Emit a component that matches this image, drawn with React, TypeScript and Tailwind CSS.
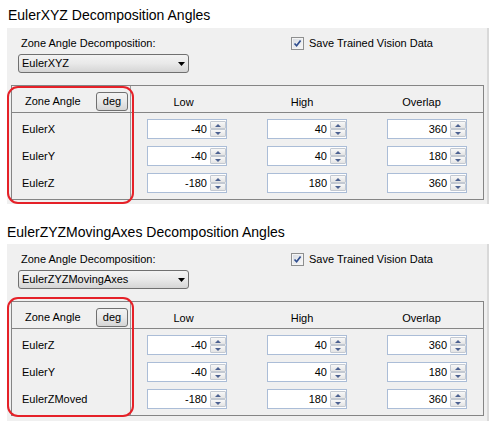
import React from 'react';

type Row = { name: string; low: number; high: number; overlap: number };

type SectionProps = {
  title: string;
  mode: string;
  rows: Row[];
  first?: boolean;
};

const Spin = ({ value }: { value: number }) => (
  <div className="flex h-[20px] w-[80px] border border-[#abbdd7] bg-white">
    <div className="flex-1 pr-[3px] text-right leading-[18px]">{value}</div>
    <div className="my-[1px] flex w-[16px] flex-col">
      <div className="flex h-[8px] items-center justify-center rounded-[1px] border border-[#c3c9d2] bg-gradient-to-b from-[#f8f8f8] to-[#e4e4e4]">
        <div className="h-0 w-0 border-x-[3px] border-b-[3px] border-x-transparent border-b-[#4d6291]" />
      </div>
      <div className="flex h-[8px] items-center justify-center rounded-[1px] border border-[#c3c9d2] bg-gradient-to-b from-[#f8f8f8] to-[#e4e4e4]">
        <div className="h-0 w-0 border-x-[3px] border-t-[3px] border-x-transparent border-t-[#4d6291]" />
      </div>
    </div>
  </div>
);

const Section = ({ title, mode, rows, first }: SectionProps) => (
  <div>
    <div
      className={
        first
          ? 'h-[28px] pl-[8px] pt-[7px] text-[14px] leading-[16px]'
          : 'h-[40px] pl-[7px] pt-[20px] text-[14px] leading-[16px]'
      }
    >
      {title}
    </div>

    <div
      className={
        'relative ml-[7px] w-[482px] border-r-2 border-[#d9d9d9] bg-[#f0f0f0] ' +
        (first ? 'h-[176px]' : 'h-[180px]')
      }
    >
      {/* combo + checkbox */}
      <div className="flex h-[57px]">
        <div className="w-[284px] pl-[11px] pt-[9px]">
          <div className="h-[13px] pl-[3px] leading-[13px]">Zone Angle Decomposition:</div>
          <div className="mt-[4px] flex h-[19px] w-[171px] items-center rounded-[3px] border border-[#707070] bg-gradient-to-b from-[#f3f3f3] via-[#e9e9e9] to-[#d5d5d5] pl-[3px] pr-[3px]">
            <span className="leading-[13px]">{mode}</span>
            <svg className="ml-auto" width="7" height="4" viewBox="0 0 7 4">
              <polygon points="0,0 7,0 3.5,4" fill="#000" />
            </svg>
          </div>
        </div>
        <div className="flex h-[13px] items-center pt-0 mt-[9px]">
          <div className="h-[13px] w-[13px] border border-[#8e8f8f] bg-[#f4f4f4] p-[1px]">
            <div className="h-full w-full bg-gradient-to-br from-[#d9dde3] to-[#f7f7f7]">
              <svg width="9" height="9" viewBox="0 0 9 9">
                <path d="M1.5 4.5 L3.6 6.8 L7.6 1.6" fill="none" stroke="#2f4d8e" strokeWidth="1.7" />
              </svg>
            </div>
          </div>
          <span className="ml-[5px] leading-[13px]">Save Trained Vision Data</span>
        </div>
      </div>

      {/* grid */}
      <div className="ml-[4px] w-[473px] border border-[#858585]">
        <div className="flex h-[27px] border-b border-[#858585]">
          <div className="flex w-[119px] items-center border-r border-[#9a9a9a] pb-[1px] pl-[13px] pt-[5px]">
            <span>Zone Angle</span>
            <div className="ml-auto mr-[2px] flex h-[19px] w-[32px] items-center justify-center rounded-[3px] border border-[#707070] bg-gradient-to-b from-[#f3f3f3] via-[#e9e9e9] to-[#d5d5d5]">
              deg
            </div>
          </div>
          <div className="w-[120px] pr-[15px] pt-[8px] text-center">Low</div>
          <div className="w-[120px] pr-[18px] pt-[8px] text-center">High</div>
          <div className="flex-1 pr-[11px] pt-[8px] text-center">Overlap</div>
        </div>

        {rows.map((r) => (
          <div key={r.name} className="flex h-[27px]">
            <div className="w-[119px] border-r border-[#9a9a9a] pl-[10px] pt-[10px] leading-[13px]">
              {r.name}
            </div>
            <div className="w-[120px] pl-[16px] pt-[6px]">
              <Spin value={r.low} />
            </div>
            <div className="w-[120px] pl-[16px] pt-[6px]">
              <Spin value={r.high} />
            </div>
            <div className="flex-1 pl-[16px] pt-[6px]">
              <Spin value={r.overlap} />
            </div>
          </div>
        ))}
        <div className="flex h-[5px]">
          <div className="w-[119px] border-r border-[#9a9a9a]" />
        </div>
      </div>

      {/* hand-drawn highlight */}
      <div
        className={
          'pointer-events-none absolute left-0 w-[127px] rounded-[11px] border-2 border-[#e52128] ' +
          (first ? 'top-[58px] h-[118px]' : 'top-[53px] h-[120px]')
        }
      />
    </div>
  </div>
);

const App = () => (
  <div className="h-[421px] w-[503px] overflow-hidden bg-white font-['Liberation_Sans',Arial,sans-serif] text-[11px] text-black">
    <Section
      first
      title="EulerXYZ Decomposition Angles"
      mode="EulerXYZ"
      rows={[
        { name: 'EulerX', low: -40, high: 40, overlap: 360 },
        { name: 'EulerY', low: -40, high: 40, overlap: 180 },
        { name: 'EulerZ', low: -180, high: 180, overlap: 360 },
      ]}
    />
    <Section
      title="EulerZYZMovingAxes Decomposition Angles"
      mode="EulerZYZMovingAxes"
      rows={[
        { name: 'EulerZ', low: -40, high: 40, overlap: 360 },
        { name: 'EulerY', low: -40, high: 40, overlap: 180 },
        { name: 'EulerZMoved', low: -180, high: 180, overlap: 360 },
      ]}
    />
  </div>
);

export default App;
